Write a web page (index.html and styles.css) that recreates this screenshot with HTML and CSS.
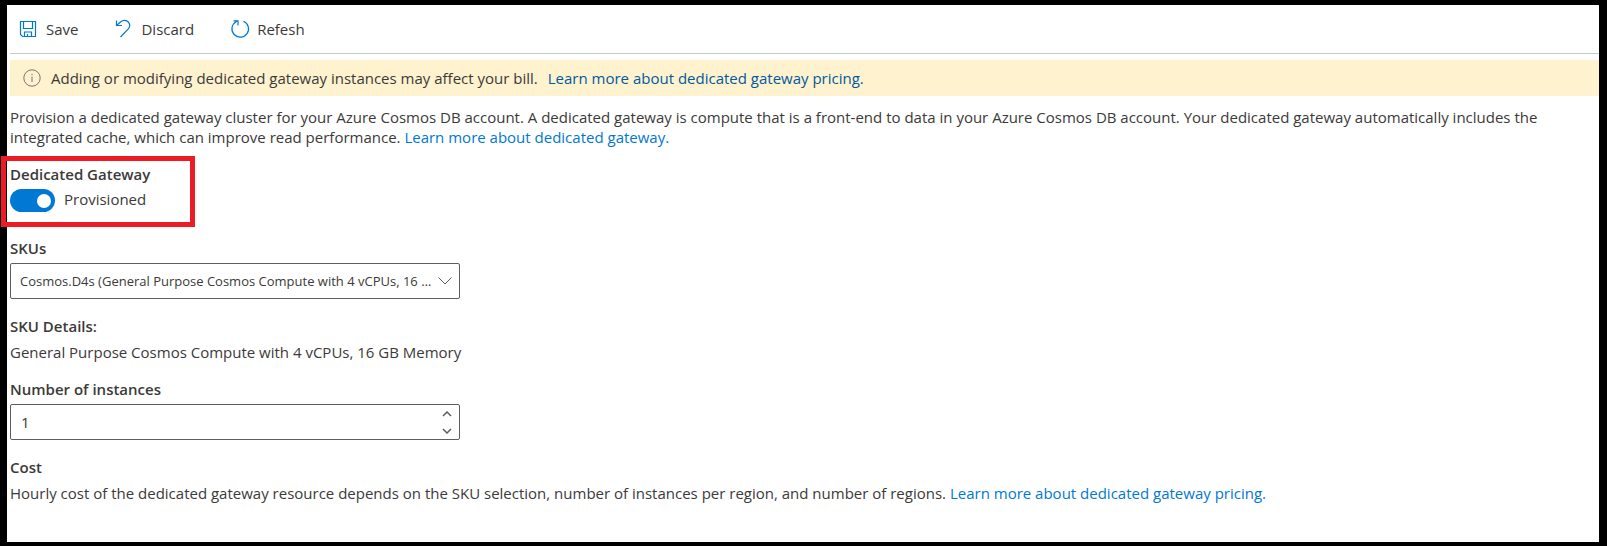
FILE: index.html
```html
<!DOCTYPE html>
<html lang="en">
<head>
<meta charset="utf-8">
<title>Dedicated Gateway</title>
<link rel="stylesheet" href="styles.css">
</head>
<body>
<main class="page">
  <div class="toolbar">
    <button type="button" class="command">
      <svg class="icon" width="18" height="18" viewBox="0 0 18 18" aria-hidden="true"><path d="M.5 1.500h15v15H2.500l-2-2zM3.500 1.500v7h9v-7M4.500 16.500v-4.500h7v4.500M7.500 16.500v-2.500"/></svg>
      Save
    </button>
    <button type="button" class="command">
      <svg class="icon" width="18" height="18" viewBox="0 0 18 18" aria-hidden="true"><path d="M1.500 .5v5H7M1.500 5.500L5.500 2C8-.3 11.500 0 13.300 2c2 2.300 1.700 4.800 0 6.800L5.500 17"/></svg>
      Discard
    </button>
    <button type="button" class="command">
      <svg class="icon" width="18" height="18" viewBox="0 0 18 18" aria-hidden="true"><path d="M12.500 1.200A8.300 8.300 0 1 1 5 1.700L7 .8M2.500.8H7V5.500"/></svg>
      Refesh
    </button>
  </div>
  <div class="banner">
    <svg class="info" width="18" height="18" viewBox="0 0 18 18" aria-hidden="true"><circle cx="9" cy="9" r="8.200"/><path d="M9 7.500v5.500M9 4.800v1.400"/></svg>
    <span>Adding or modifying dedicated gateway instances may affect your bill.</span>
    <a href="#pricing">Learn more about dedicated gateway pricing.</a>
  </div>
  <p class="intro">Provision a dedicated gateway cluster for your Azure Cosmos DB account. A dedicated gateway is compute that is a front-end to data in your Azure Cosmos DB account. Your dedicated gateway automatically includes the integrated cache, which can improve read performance. <a href="#gateway">Learn more about dedicated gateway.</a></p>
  <section class="highlight">
    <label class="title" for="gateway">Dedicated Gateway</label>
    <div class="toggle-row">
      <input class="toggle" type="checkbox" role="switch" id="gateway" checked>
      <span>Provisioned</span>
    </div>
  </section>
  <section class="field sku">
    <label class="title" for="sku">SKUs</label>
    <div class="control">
      <select class="box select" id="sku"><option>Cosmos.D4s (General Purpose Cosmos Compute with 4 vCPUs, 16 GB Memory)</option></select>
      <svg class="chevron" width="14" height="8" viewBox="0 0 14 8" aria-hidden="true"><path d="M.5.5L7 7 13.500.5"/></svg>
    </div>
  </section>
  <section class="field">
    <h2 class="title">SKU Details:</h2>
    <p class="value">General Purpose Cosmos Compute with 4 vCPUs, 16 GB Memory</p>
  </section>
  <section class="field">
    <label class="title" for="instances">Number of instances</label>
    <div class="control">
      <input class="box number" type="number" id="instances" value="1" min="1">
      <div class="spinner">
        <button type="button" aria-label="Increase"><svg width="10" height="6" viewBox="0 0 10 6"><path d="M1 5l4-4 4 4"/></svg></button>
        <button type="button" aria-label="Decrease"><svg width="10" height="6" viewBox="0 0 10 6"><path d="M1 1l4 4 4-4"/></svg></button>
      </div>
    </div>
  </section>
  <section class="field">
    <h2 class="title">Cost</h2>
    <p class="value">Hourly cost of the dedicated gateway resource depends on the SKU selection, number of instances per region, and number of regions. <a href="#pricing">Learn more about dedicated gateway pricing.</a></p>
  </section>
</main>
</body>
</html>
```
FILE: styles.css
```css
* { box-sizing: border-box; }
body {
  margin: 0;
  padding: 5px 8px 4px 7px;
  min-height: 100vh;
  display: flex;
  background: #000;
  color: #3b3a39;
  font: 15px/20px "Open Sans", "Noto Sans", sans-serif;
}
button, input, select { font: inherit; color: inherit; }
svg { fill: none; flex: none; }
a { color: #0078d4; text-decoration: none; }
.page { flex: 1; min-width: 0; padding-left: 3px; background: #fff; }
.toolbar {
  display: flex;
  gap: 37px;
  height: 49px;
  padding-left: 10px;
  border-bottom: 1px solid #c8c8c8;
}
.command {
  display: flex;
  align-items: center;
  gap: 8px;
  padding: 0;
  border: 0;
  background: none;
}
.icon { stroke: #0078d4; stroke-width: 1.2; overflow: visible; }
.banner {
  display: flex;
  align-items: center;
  gap: 10px;
  margin-top: 6px;
  padding: 8px 13px;
  background: #fff2cf;
}
.banner a { color: #005a9e; }
.info { stroke: #797775; }
.intro { margin: 11px 56px 9px 0; }
.highlight {
  width: 194px;
  margin-left: -9px;
  padding: 3px 4px 10px;
  border: 5px solid #ed1c24;
  position: relative;
}
.title { display: block; margin: 0; font-size: 15px; font-weight: 600; }
.toggle-row { display: flex; align-items: center; gap: 9px; margin-top: 5px; }
.toggle-row span { padding-bottom: 3px; }
.toggle {
  appearance: none;
  display: flex;
  align-items: center;
  justify-content: flex-end;
  width: 45px;
  height: 23px;
  margin: 0;
  padding-right: 4px;
  border-radius: 12px;
  background: #0078d4;
}
.toggle::before {
  content: "";
  width: 14px;
  height: 14px;
  border-radius: 50%;
  background: #fff;
}
.field { margin-bottom: 17px; }
.sku { margin-top: 11px; }
.control { display: grid; align-items: center; max-width: 450px; margin-top: 5px; }
.control > * { grid-area: 1 / 1; }
.box {
  appearance: none;
  width: 100%;
  height: 36px;
  margin: 0;
  padding: 0 26px 0 10px;
  border: 1px solid #605e5c;
  border-radius: 2px;
  background: #fff;
}
.select { padding-left: 9px; font-size: 13px; text-overflow: ellipsis; }
.number { appearance: textfield; }
.number::-webkit-inner-spin-button { appearance: none; }
.chevron { justify-self: end; margin-right: 8px; stroke: #605e5c; pointer-events: none; }
.spinner { justify-self: end; display: grid; margin-right: 3px; }
.spinner button {
  display: grid;
  place-items: center;
  width: 20px;
  height: 17px;
  padding: 0;
  border: 0;
  background: none;
}
.spinner svg { stroke: #605e5c; stroke-width: 1.500; }
.value { margin: 6px 0 0; }
```
